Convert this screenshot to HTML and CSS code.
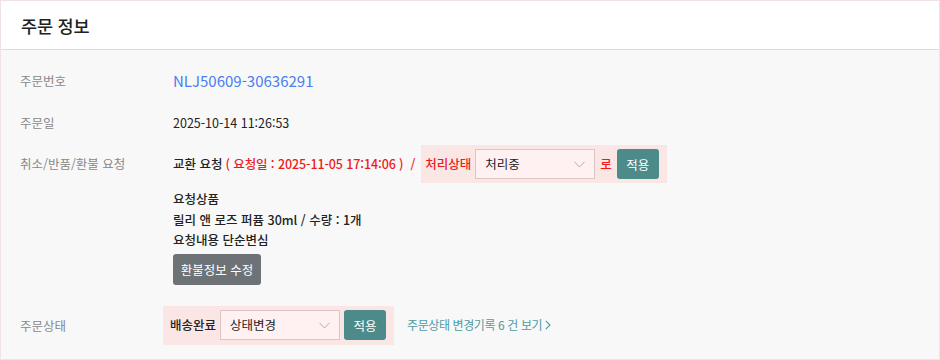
FILE: index.html
```html
<!DOCTYPE html>
<html lang="ko">
<head>
<meta charset="utf-8">
<title>주문 정보</title>
<link rel="stylesheet" href="styles.css">
</head>
<body>
<div class="card">
  <div class="card-header">
    <h2 class="title">주문 정보</h2>
  </div>
  <div class="card-body">
    <div class="row row-no">
      <div class="label">주문번호</div>
      <div class="value order-no">NLJ50609-30636291</div>
    </div>
    <div class="row row-date">
      <div class="label">주문일</div>
      <div class="value">2025-10-14 11:26:53</div>
    </div>
    <div class="row row-claim">
      <div class="label label-box">취소/반품/환불 요청</div>
      <div class="value claim">
        <div class="claim-line">
          <span class="strong">교환 요청</span>
          <span class="red req-date">( 요청일 : 2025-11-05 17:14:06 )</span>
          <span class="red slash">/</span>
          <div class="pink-box pink-top">
            <span class="red">처리상태</span>
            <div class="select">
              <span>처리중</span>
              <svg class="chev" width="11" height="7" viewBox="0 0 11 7"><path d="M0.5 0.8 L5.5 6 L10.5 0.8" fill="none" stroke="#b5a9a9" stroke-width="1"/></svg>
            </div>
            <span class="red ro">로</span>
            <button class="btn btn-teal">적용</button>
          </div>
        </div>
        <div class="detail">
          <div class="strong">요청상품</div>
          <div class="strong">릴리 앤 로즈 퍼퓸 30ml / 수량 : 1개</div>
          <div class="strong">요청내용 단순변심</div>
        </div>
        <button class="btn btn-gray">환불정보 수정</button>
      </div>
    </div>
    <div class="row row-status">
      <div class="label label-box2">주문상태</div>
      <div class="value status">
        <div class="pink-box pink-bottom">
          <span class="strong">배송완료</span>
          <div class="select">
            <span>상태변경</span>
            <svg class="chev" width="11" height="7" viewBox="0 0 11 7"><path d="M0.5 0.8 L5.5 6 L10.5 0.8" fill="none" stroke="#b5a9a9" stroke-width="1"/></svg>
          </div>
          <button class="btn btn-teal">적용</button>
        </div>
        <a class="history" href="#">주문상태 변경기록 6 건 보기 <svg class="arrow" width="6" height="10" viewBox="0 0 6 10"><path d="M0.8 0.8 L5 5 L0.8 9.2" fill="none" stroke="#4e9ba3" stroke-width="1.1"/></svg></a>
      </div>
    </div>
  </div>
</div>
</body>
</html>
```
FILE: styles.css
```css
* { box-sizing: border-box; }
html, body { margin: 0; padding: 0; }
body {
  width: 940px;
  height: 360px;
  font-family: "Noto Sans CJK KR", "Noto Sans", sans-serif;
  font-size: 12.5px;
  color: #333;
  background: #fff;
}
.card {
  width: 940px;
  height: 360px;
  border: 1px solid #f1e3e3;
  display: flex;
  flex-direction: column;
}
.card-header {
  height: 49px;
  background: #fff;
  border-bottom: 1px solid #dcdcdc;
  display: flex;
  align-items: center;
  padding-left: 20px;
}
.title {
  margin: 0;
  font-size: 17.5px;
  font-weight: 500;
  color: #222;
  letter-spacing: -0.2px;
}
.card-body {
  flex: 1;
  background: #f8f8f8;
  padding: 20px 20px 0 19px;
}
.row {
  display: grid;
  grid-template-columns: 153px 1fr;
  align-items: start;
}
.label {
  color: #888;
  line-height: 22px;
}
.value { line-height: 22px; color: #222; }
.order-no {
  font-size: 15px;
  color: #4a7ef2;
}
.row-date { margin-top: 20px; }
.row-claim { margin-top: 11px; }
.label-box { line-height: 38px; }
.claim-line {
  display: flex;
  align-items: center;
  height: 38px;
}
.strong { font-weight: 500; color: #222; }
.red { color: #ee1b1b; font-weight: 500; }
.req-date { margin-left: 3px; letter-spacing: -0.1px; }
.slash { margin: 0 6px 0 7px; }
.pink-box {
  display: flex;
  align-items: center;
  background: #fbe6e6;
  height: 38px;
}
.pink-top { padding: 0 8px 0 4px; }
.pink-top .select { margin-left: 4px; }
.ro { margin: 0 5px 0 5px; }
.select {
  width: 120px;
  height: 30px;
  border: 1px solid #dcc5c5;
  background: #fff1f1;
  display: flex;
  align-items: center;
  justify-content: space-between;
  padding: 0 9px 0 9px;
  color: #222;
}
.chev { display: block; }
.btn {
  font-family: inherit;
  border: 0;
  border-radius: 3px;
  color: #fff;
  font-size: 12.5px;
  cursor: pointer;
  padding: 0;
}
.btn-teal {
  width: 42px;
  height: 30px;
  background: #4d8a8a;
}
.detail {
  margin-top: 6px;
  line-height: 20.5px;
}
.btn-gray {
  margin-top: 3px;
  width: 88px;
  height: 31px;
  background: #6c7276;
}
.row-status { margin-top: 21px; }
.label-box2 { line-height: 39px; }
.status {
  display: flex;
  align-items: center;
}
.pink-bottom {
  height: 39px;
  margin-left: -10px;
  padding: 0 8px 0 7px;
}
.pink-bottom .select { margin-left: 4px; margin-right: 4px; }
.history {
  margin-left: 13px;
  color: #4e9ba3;
  text-decoration: none;
  font-size: 12px;
  letter-spacing: -0.4px;
  display: flex;
  align-items: center;
  gap: 3px;
}
.arrow { display: block; }
```
